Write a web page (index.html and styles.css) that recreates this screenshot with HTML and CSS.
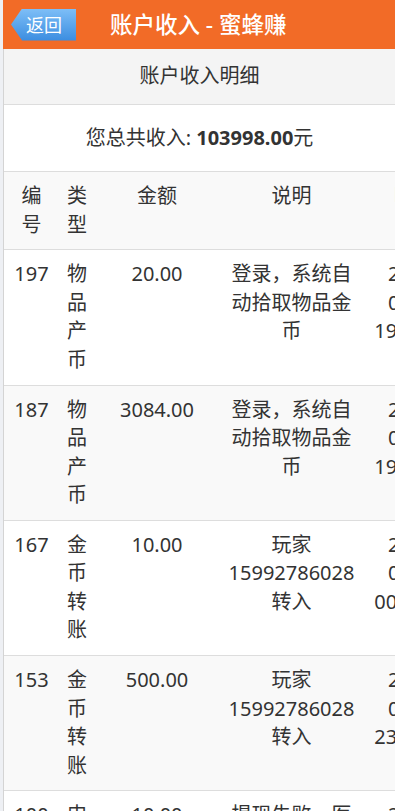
FILE: index.html
```
<!DOCTYPE html>
<html lang="zh-CN">
<head>
  <meta charset="UTF-8" />
  <title>账户收入 - 蜜蜂赚</title>
  <meta name="viewport" content="width=device-width, initial-scale=1" />
  <link rel="stylesheet" href="styles.css">
</head>
<body>
  <header class="topbar">
    <a href="#" class="back-btn">返回</a>
    <h1 class="topbar-title">账户收入 - 蜜蜂赚</h1>
  </header>
  <div class="page">
    <div class="panel-title">账户收入明细</div>
    <div class="summary">您总共收入: <b>103998.00</b>元</div>
    <div class="table-wrap">
      <table class="income-table">
        <colgroup>
          <col class="col-id">
          <col class="col-type">
          <col class="col-amount">
          <col class="col-note">
          <col class="col-time">
        </colgroup>
        <thead>
          <tr>
            <th>编号</th>
            <th>类型</th>
            <th>金额</th>
            <th>说明</th>
            <th>时间</th>
          </tr>
        </thead>
        <tbody>
          <tr>
            <td>197</td>
            <td>物品产币</td>
            <td>20.00</td>
            <td>登录，系统自动拾取物品金币</td>
            <td><span class="dt">2019-</span><span class="dt">06-13</span><span class="dt">19:25:40</span></td>
          </tr>
          <tr>
            <td>187</td>
            <td>物品产币</td>
            <td>3084.00</td>
            <td>登录，系统自动拾取物品金币</td>
            <td><span class="dt">2019-</span><span class="dt">06-12</span><span class="dt">19:02:11</span></td>
          </tr>
          <tr>
            <td>167</td>
            <td>金币转账</td>
            <td>10.00</td>
            <td>玩家15992786028转入</td>
            <td><span class="dt">2019-</span><span class="dt">06-10</span><span class="dt">00:41:27</span></td>
          </tr>
          <tr>
            <td>153</td>
            <td>金币转账</td>
            <td>500.00</td>
            <td>玩家15992786028转入</td>
            <td><span class="dt">2019-</span><span class="dt">06-08</span><span class="dt">23:15:09</span></td>
          </tr>
          <tr>
            <td>100</td>
            <td>申请提现</td>
            <td>10.00</td>
            <td>提现失败，医院退回</td>
            <td><span class="dt">2019-</span><span class="dt">06-01</span><span class="dt">10:20:33</span></td>
          </tr>
        </tbody>
      </table>
    </div>
  </div>
</body>
</html>
```

FILE: styles.css
```
* {
  box-sizing: border-box;
}
html, body {
  overflow-x: hidden;
}
body {
  margin: 0;
  padding-left: 3px;
  background-color: #eef0f4;
  font-family: "Noto Sans", "Noto Sans CJK SC", sans-serif;
  font-size: 20px;
  line-height: 1.428571;
  color: #333;
}

.topbar {
  display: flex;
  align-items: center;
  height: 49px;
  padding-left: 8px;
  background-color: #f26b27;
}
.back-btn {
  display: block;
  width: 65px;
  height: 32px;
  padding-left: 15px;
  font-size: 18px;
  line-height: 32px;
  color: #fff;
  text-decoration: none;
  background: linear-gradient(to bottom, #7dbef7, #3b8de0);
  clip-path: polygon(0 50%, 11px 0, 100% 0, 100% 100%, 11px 100%);
}
.topbar-title {
  margin: 0 0 0 34px;
  font-size: 22.5px;
  font-weight: 500;
  line-height: 30px;
  color: #fff;
  white-space: nowrap;
}

.page {
  border-left: 1px solid #d4d4d4;
  background-color: #fff;
  min-height: calc(100vh - 49px);
}
.panel-title {
  padding: 13px 0;
  text-align: center;
  background-color: #f4f4f4;
  border-bottom: 1px solid #ddd;
}
.summary {
  padding: 19px 0;
  text-align: center;
  border-bottom: 1px solid #ddd;
}
.summary b {
  font-weight: bold;
}

.table-wrap {
  overflow: hidden;
}
.income-table {
  table-layout: fixed;
  width: 460px;
  border-collapse: collapse;
}
.col-id { width: 55px; }
.col-type { width: 36px; }
.col-amount { width: 124px; }
.col-note { width: 145px; }
.col-time { width: 100px; }

.income-table th,
.income-table td {
  padding: 10px 8px;
  text-align: center;
  vertical-align: top;
  font-weight: normal;
  border-bottom: 1px solid #ddd;
}
.income-table thead tr {
  background-color: #f9f9f9;
}
.income-table tbody tr:nth-child(even) {
  background-color: #f9f9f9;
}
.dt {
  display: block;
  white-space: nowrap;
}
```
